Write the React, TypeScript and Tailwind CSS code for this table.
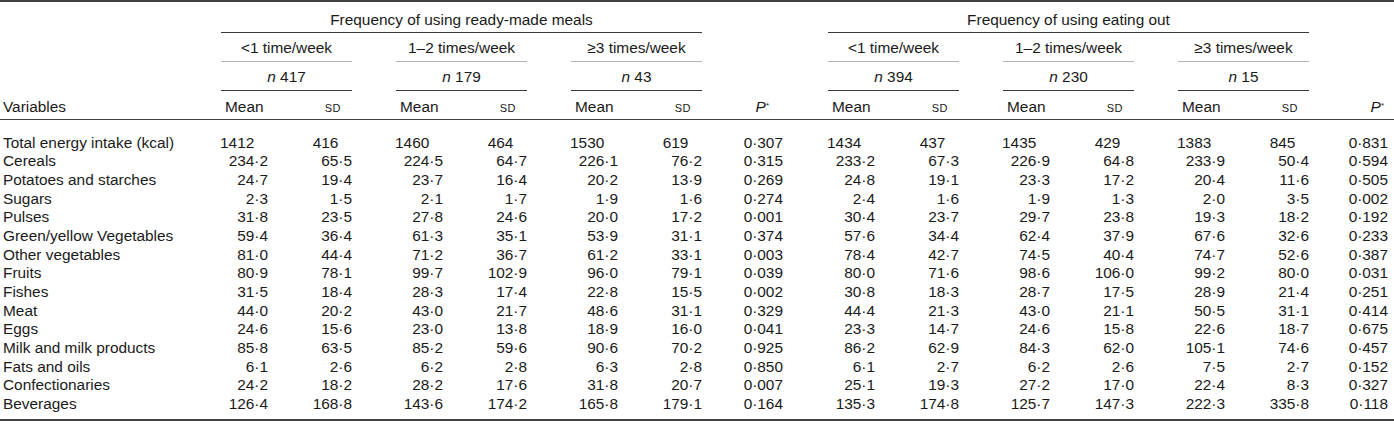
const GRID =
  'grid grid-cols-[221px_47px_84px_44px_47px_84px_44px_47px_84px_81px_45px_47px_84px_44px_47px_84px_44px_47px_84px_79px_6px]';

type Row = [string, string[], string, string[], string];

// label, ready-made (mean/sd x3), P, eating out (mean/sd x3), P
const rows: Row[] = [
  ['Total energy intake (kcal)', ['1412', '416', '1460', '464', '1530', '619'], '0·307', ['1434', '437', '1435', '429', '1383', '845'], '0·831'],
  ['Cereals', ['234·2', '65·5', '224·5', '64·7', '226·1', '76·2'], '0·315', ['233·2', '67·3', '226·9', '64·8', '233·9', '50·4'], '0·594'],
  ['Potatoes and starches', ['24·7', '19·4', '23·7', '16·4', '20·2', '13·9'], '0·269', ['24·8', '19·1', '23·3', '17·2', '20·4', '11·6'], '0·505'],
  ['Sugars', ['2·3', '1·5', '2·1', '1·7', '1·9', '1·6'], '0·274', ['2·4', '1·6', '1·9', '1·3', '2·0', '3·5'], '0·002'],
  ['Pulses', ['31·8', '23·5', '27·8', '24·6', '20·0', '17·2'], '0·001', ['30·4', '23·7', '29·7', '23·8', '19·3', '18·2'], '0·192'],
  ['Green/yellow Vegetables', ['59·4', '36·4', '61·3', '35·1', '53·9', '31·1'], '0·374', ['57·6', '34·4', '62·4', '37·9', '67·6', '32·6'], '0·233'],
  ['Other vegetables', ['81·0', '44·4', '71·2', '36·7', '61·2', '33·1'], '0·003', ['78·4', '42·7', '74·5', '40·4', '74·7', '52·6'], '0·387'],
  ['Fruits', ['80·9', '78·1', '99·7', '102·9', '96·0', '79·1'], '0·039', ['80·0', '71·6', '98·6', '106·0', '99·2', '80·0'], '0·031'],
  ['Fishes', ['31·5', '18·4', '28·3', '17·4', '22·8', '15·5'], '0·002', ['30·8', '18·3', '28·7', '17·5', '28·9', '21·4'], '0·251'],
  ['Meat', ['44·0', '20·2', '43·0', '21·7', '48·6', '31·1'], '0·329', ['44·4', '21·3', '43·0', '21·1', '50·5', '31·1'], '0·414'],
  ['Eggs', ['24·6', '15·6', '23·0', '13·8', '18·9', '16·0'], '0·041', ['23·3', '14·7', '24·6', '15·8', '22·6', '18·7'], '0·675'],
  ['Milk and milk products', ['85·8', '63·5', '85·2', '59·6', '90·6', '70·2'], '0·925', ['86·2', '62·9', '84·3', '62·0', '105·1', '74·6'], '0·457'],
  ['Fats and oils', ['6·1', '2·6', '6·2', '2·8', '6·3', '2·8'], '0·850', ['6·1', '2·7', '6·2', '2·6', '7·5', '2·7'], '0·152'],
  ['Confectionaries', ['24·2', '18·2', '28·2', '17·6', '31·8', '20·7'], '0·007', ['25·1', '19·3', '27·2', '17·0', '22·4', '8·3'], '0·327'],
  ['Beverages', ['126·4', '168·8', '143·6', '174·2', '165·8', '179·1'], '0·164', ['135·3', '174·8', '125·7', '147·3', '222·3', '335·8'], '0·118'],
];

const freqs = ['<1 time/week', '1–2 times/week', '≥3 times/week'];

function Num({ v }: { v: string }) {
  // integers get an invisible decimal so they line up on the point
  const whole = !v.includes('·');
  return (
    <div className="flex justify-end whitespace-nowrap">
      <span>{v}</span>
      {whole && <span className="invisible">·0</span>}
    </div>
  );
}

function Group({ vals }: { vals: string[] }) {
  return (
    <>
      <Num v={vals[0]} />
      <Num v={vals[1]} />
      <div />
      <Num v={vals[2]} />
      <Num v={vals[3]} />
      <div />
      <Num v={vals[4]} />
      <Num v={vals[5]} />
    </>
  );
}

function SubHeads({ labels, light }: { labels: React.ReactNode[]; light?: boolean }) {
  const line = light ? 'border-b border-[#b4b4b4]' : 'border-b border-[#3a3a3a]';
  return (
    <>
      <div className={`col-span-2 text-center ${line}`}>{labels[0]}</div>
      <div />
      <div className={`col-span-2 text-center ${line}`}>{labels[1]}</div>
      <div />
      <div className={`col-span-2 text-center ${line}`}>{labels[2]}</div>
    </>
  );
}

function MeanSd() {
  return (
    <>
      <div className="pl-[4px]">Mean</div>
      <div className="text-right pr-[11px]">
        <span className="text-[11px] tracking-[0.5px]">SD</span>
      </div>
    </>
  );
}

function PHead({ pr }: { pr: string }) {
  return (
    <div className={`text-right ${pr}`}>
      <i>P</i>
      <sup className="text-[8px]">*</sup>
    </div>
  );
}

export default function App() {
  const nLeft = ['417', '179', '43'].map((n) => (
    <span key={n}>
      <i>n</i> {n}
    </span>
  ));
  const nRight = ['394', '230', '15'].map((n) => (
    <span key={n}>
      <i>n</i> {n}
    </span>
  ));

  return (
    <div className="w-[1394px] bg-white text-[#1a1a1a] text-[15.4px] leading-[18px] font-['Liberation_Sans',Arial,sans-serif]">
      <div className="border-t-2 border-b-2 border-[#404040]">
        {/* header */}
        <div className={`${GRID} h-[31px]`}>
          <div />
          <div className="col-span-8 text-center pt-[9px] border-b border-[#3a3a3a]">
            Frequency of using ready-made meals
          </div>
          <div className="col-span-2" />
          <div className="col-span-8 text-center pt-[9px] border-b border-[#3a3a3a]">
            Frequency of using eating out
          </div>
          <div className="col-span-2" />
        </div>

        <div className={`${GRID} h-[29px] [&>div]:pt-[6px]`}>
          <div />
          <SubHeads labels={freqs} light />
          <div className="col-span-2" />
          <SubHeads labels={freqs} light />
          <div className="col-span-2" />
        </div>

        <div className={`${GRID} h-[29px] [&>div]:pt-[6px]`}>
          <div />
          <SubHeads labels={nLeft} />
          <div className="col-span-2" />
          <SubHeads labels={nRight} />
          <div className="col-span-2" />
        </div>

        <div className={`${GRID} h-[29px] border-b border-[#404040] [&>div]:pt-[7px]`}>
          <div className="pl-[3px]">Variables</div>
          <MeanSd />
          <div />
          <MeanSd />
          <div />
          <MeanSd />
          <PHead pr="pr-[14px]" />
          <div />
          <MeanSd />
          <div />
          <MeanSd />
          <div />
          <MeanSd />
          <PHead pr="pr-[4px]" />
          <div />
        </div>

        {/* body */}
        <div className="pt-[13.5px] pb-[5px]">
          {rows.map(([label, left, p1, right, p2]) => (
            <div key={label} className={`${GRID} h-[18.7px] leading-[18.7px]`}>
              <div className="pl-[3px] whitespace-nowrap">{label}</div>
              <Group vals={left} />
              <Num v={p1} />
              <div />
              <Group vals={right} />
              <Num v={p2} />
              <div />
            </div>
          ))}
        </div>
      </div>
    </div>
  );
}
